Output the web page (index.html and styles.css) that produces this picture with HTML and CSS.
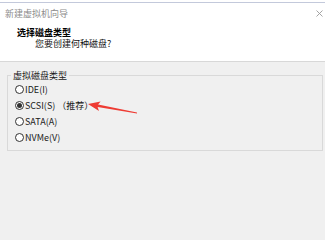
FILE: index.html
```html
<!DOCTYPE html>
<html lang="zh-CN">
<head>
<meta charset="utf-8">
<title>新建虚拟机向导</title>
<link rel="stylesheet" href="styles.css">
</head>
<body>
<div class="window">
  <div class="strip"></div>
  <div class="header">
    <div class="titlebar">
      <span class="title">新建虚拟机向导</span>
      <svg class="close" width="7" height="7" viewBox="0 0 7 7"><path d="M0.5 0.5L6.5 6.5M6.5 0.5L0.5 6.5" stroke="#9a9a9a" stroke-width="0.9" fill="none"/></svg>
    </div>
    <div class="heading">选择磁盘类型</div>
    <div class="subtitle">您要创建何种磁盘?</div>
  </div>
  <div class="main">
    <fieldset class="group">
      <legend class="legend">虚拟磁盘类型</legend>
      <div class="row"><span class="radio"></span><span class="label">IDE(I)</span></div>
      <div class="row"><span class="radio checked"></span><span class="label">SCSI(S) <span class="rec">（推荐）</span></span></div>
      <div class="row"><span class="radio"></span><span class="label">SATA(A)</span></div>
      <div class="row"><span class="radio"></span><span class="label">NVMe(V)</span></div>
    </fieldset>
  </div>
  <svg class="arrow" width="55" height="18" viewBox="0 0 55 18"><polygon points="2,6 14.6,3.4 12.1,6.5 51,14.6 51,15.4 11.6,9.1 13,12.9" fill="#ee3b33"/></svg>
</div>
</body>
</html>
```
FILE: styles.css
```css
html, body {
  margin: 0;
  padding: 0;
}
body {
  width: 325px;
  height: 228px;
  background: #f0f0f0;
  font-family: "Noto Sans CJK SC", "Noto Sans", sans-serif;
  font-size: 9px;
  line-height: 11px;
  color: #1a1a1a;
  overflow: hidden;
}
.window {
  position: relative;
  width: 325px;
  height: 228px;
}
.strip {
  height: 2px;
  background: #ffffff;
  border-bottom: 1px solid #c3c9db;
}
.header {
  background: #ffffff;
  border-bottom: 1px solid #d8d8d8;
  box-sizing: border-box;
  height: 59px;
}
.titlebar {
  display: flex;
  align-items: center;
  justify-content: space-between;
  padding: 5px 2px 0 5px;
  height: 11px;
}
.title {
  color: #8c8c8c;
}
.close {
  display: block;
}
.heading {
  margin-top: 8px;
  padding-left: 17px;
  font-weight: 700;
  color: #000;
}
.subtitle {
  padding-left: 35px;
  color: #111;
}
.main {
  padding: 8px 2px 0 7px;
}
.group {
  margin: 0;
  padding: 0 7px 5px 7px;
  border: 1px solid #d9d9d9;
  min-width: 0;
}
.legend {
  padding: 0 2px;
  margin-left: -4px;
  color: #1a1a1a;
}
.row {
  display: flex;
  align-items: center;
  height: 16px;
  gap: 1px;
}
.radio {
  width: 9px;
  height: 9px;
  box-sizing: border-box;
  border: 1px solid #333;
  border-radius: 50%;
  background: #fff;
  display: flex;
  align-items: center;
  justify-content: center;
  flex: none;
}
.radio.checked::after {
  content: "";
  width: 5px;
  height: 5px;
  border-radius: 50%;
  background: #333;
}
.arrow {
  position: absolute;
  left: 86px;
  top: 98px;
}
```
